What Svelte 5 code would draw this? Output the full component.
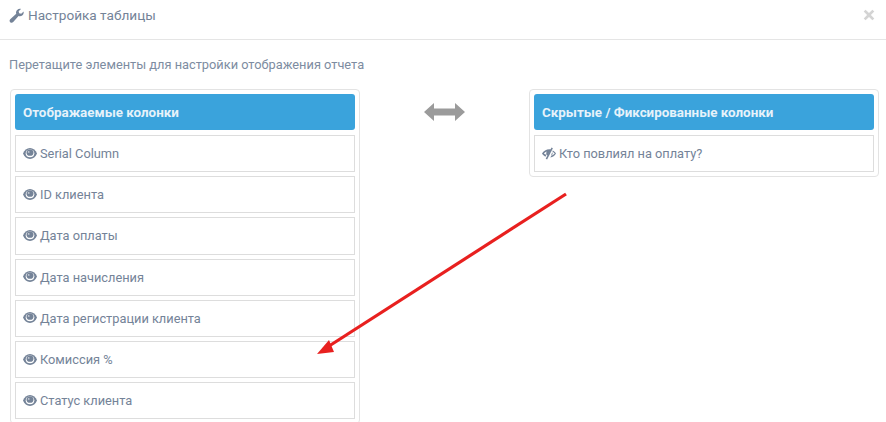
<script>
  const shown = [
    'Serial Column',
    'ID клиента',
    'Дата оплаты',
    'Дата начисления',
    'Дата регистрации клиента',
    'Комиссия %',
    'Статус клиента'
  ];
</script>

{#snippet eye()}
  <svg class="eye" viewBox="0 0 14 11" aria-hidden="true">
    <path d="M7 0C3.900 0 1.300 2.200 0 5.500 1.300 8.800 3.900 11 7 11s5.700-2.200 7-5.500C12.700 2.200 10.100 0 7 0z" />
    <ellipse cx="7" cy="5.300" rx="4.300" ry="3.900" fill="#fff" />
    <ellipse cx="7" cy="4.700" rx="3.500" ry="3.100" />
    <circle cx="5.700" cy="3.900" r="0.900" fill="#fff" opacity="0.6" />
  </svg>
{/snippet}

{#snippet eyeOff()}
  <svg class="eye off" viewBox="0 0 14 13" aria-hidden="true">
    <path d="M7.500 2.300C4.200 2.300 1.500 4 0 6.500c.8 1.400 2 2.500 3.400 3.200l1.100-1.900C3.300 7.300 2.400 7 1.900 6.500c.8-.9 1.800-1.600 3-2-.4.500-.7 1.100-.7 1.800 0 1.100.6 2 1.400 2.500l3.700-6.400z" />
    <path d="M9.500.4 10.900 1.200 5.100 12.600 3.700 11.800z" />
    <path d="M10.600 3.400C12 4 13.200 5.100 14 6.500c-1.200 2.100-3.200 3.600-5.700 4l1-1.800c1.400-.5 2.600-1.200 3.400-2.200-.6-.7-1.300-1.300-2.100-1.700z" />
    <path d="M10.100 5.200c.3.400.5.800.5 1.300 0 1-.6 1.800-1.500 2.200z" />
  </svg>
{/snippet}

<div class="modal">
  <header class="modal-head">
    <h4>
      <svg class="wrench" viewBox="0 0 16 16" aria-hidden="true">
        <path d="M15.600 3.600c.3 1.500-.1 3-1.200 4-1.200 1.100-2.800 1.400-4.200.9L4.500 15c-.9 1-2.300 1-3.200.2-.9-.9-.9-2.300 0-3.200l6.400-5.800c-.5-1.400-.1-3 1-4.100C9.800 1 11.400.6 12.800 1L10.300 3.400l.5 2.300 2.200.5z" />
      </svg>
      Настройка таблицы
    </h4>
    <svg class="close" viewBox="0 0 12 12" aria-hidden="true">
      <path d="M2.600.7 6 4.100 9.400.7l1.900 1.900L7.900 6l3.400 3.400-1.900 1.900L6 7.900l-3.400 3.400-1.900-1.900L4.100 6 .7 2.600z" />
    </svg>
  </header>

  <p class="hint">Перетащите элементы для настройки отображения отчета</p>

  <div class="columns">
    <section class="panel">
      <div class="panel-title">Отображаемые колонки</div>
      {#each shown as name}
        <div class="row">{@render eye()}<span>{name}</span></div>
      {/each}
    </section>

    <div class="swap">
      <svg viewBox="0 0 41 18" aria-hidden="true">
        <path d="M0 9 10 0v5.500h21V0l10 9-10 9v-5.500H10V18z" />
      </svg>
    </div>

    <section class="panel">
      <div class="panel-title">Скрытые / Фиксированные колонки</div>
      <div class="row">{@render eyeOff()}<span>Кто повлиял на оплату?</span></div>
    </section>
  </div>

  <!-- annotation drawn over the screenshot -->
  <svg class="annotation" viewBox="0 0 886 422" aria-hidden="true">
    <line x1="566" y1="194" x2="326" y2="348" stroke="#e8201f" stroke-width="3.200" />
    <path d="M317 354 329 340 334 352z" fill="#e8201f" />
  </svg>
</div>

<style>
  :global(body) {
    margin: 0;
    background: #fff;
  }

  .modal {
    position: relative;
    width: 886px;
    height: 422px;
    overflow: hidden;
    font-family: Roboto, "Liberation Sans", sans-serif;
    font-size: 12.800px;
    color: #748398;
  }

  .modal-head {
    display: flex;
    align-items: center;
    justify-content: space-between;
    box-sizing: border-box;
    height: 40px;
    padding: 0 9px 9px 9px;
    border-bottom: 1px solid #e5e5e5;
  }

  h4 {
    display: flex;
    align-items: center;
    gap: 4px;
    margin: 0;
    font-size: 13.600px;
    font-weight: 400;
    color: #748398;
  }

  .wrench {
    width: 15px;
    height: 15px;
    fill: #748398;
  }

  .close {
    width: 12px;
    height: 12px;
    fill: #d4d4d4;
    margin-right: 2px;
  }

  .hint {
    margin: 17px 0 0 9px;
    line-height: 15px;
    font-size: 12.800px;
    color: #7d8ca1;
  }

  .columns {
    display: flex;
    align-items: flex-start;
    margin: 17px 7px 0 10px;
  }

  .panel {
    box-sizing: border-box;
    width: 350px;
    flex: none;
    padding: 4px;
    border: 1px solid #e3e3e3;
    border-radius: 4px;
  }

  .panel-title {
    box-sizing: border-box;
    height: 36px;
    display: flex;
    align-items: center;
    padding: 1px 0 0 8px;
    border-radius: 3px;
    background: #3aa3dc;
    color: #e6f2fa;
    font-size: 13.400px;
    font-weight: 700;
  }

  .row {
    box-sizing: border-box;
    display: flex;
    align-items: center;
    gap: 3px;
    height: 37.200px;
    margin-top: 4px;
    padding: 0 7px;
    border: 1px solid #dddddd;
    background: #fff;
  }

  .row:nth-child(2) {
    margin-top: 5px;
  }

  .eye {
    width: 14px;
    height: 11px;
    fill: #748398;
    margin-top: -1px;
  }

  .eye.off {
    height: 13px;
  }

  .swap {
    flex: 1;
    display: flex;
    justify-content: center;
    padding: 14px 0 0 0;
  }

  .swap svg {
    width: 41px;
    height: 18px;
    fill: #9b9b9b;
  }

  .annotation {
    position: absolute;
    inset: 0;
    width: 886px;
    height: 422px;
    pointer-events: none;
  }
</style>
